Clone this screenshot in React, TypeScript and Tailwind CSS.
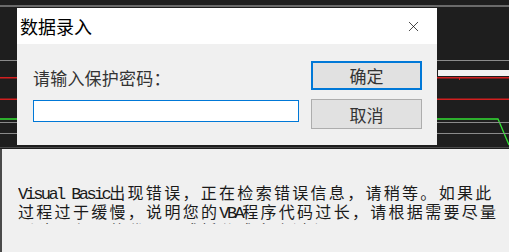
import { X } from "lucide-react";

const cjk = "font-['Noto_Sans_CJK_SC',sans-serif]";

function ChartBackdrop() {
  // the dark price chart behind the dialog
  return (
    <svg width="509" height="149" viewBox="0 0 509 149" className="block">
      <rect x="0" y="0" width="509" height="149" fill="#1e1e1e" />
      <rect x="0" y="5" width="509" height="2" fill="#6a6a6a" />
      <rect x="0" y="60" width="509" height="1" fill="#8a8a8a" />
      <rect x="438" y="70" width="71" height="6" fill="#f2f2f2" />
      <rect x="0" y="77" width="509" height="1.5" fill="#d21f1f" />
      <rect x="459" y="77" width="1" height="3" fill="#d21f1f" />
      <rect x="0" y="98.5" width="509" height="1.5" fill="#d21f1f" />
      <polyline points="0,119 498,119 509,145" fill="none" stroke="#33e033" strokeWidth="1.3" />
      <rect x="0" y="122" width="509" height="1" fill="#8a8a8a" />
      <rect x="0" y="133" width="509" height="1" fill="#8a8a8a" />
      <rect x="0" y="147" width="509" height="1" fill="#4a4a4a" />
    </svg>
  );
}

function PasswordDialog() {
  return (
    <div className={`absolute left-[17px] top-[8px] w-[420px] flex flex-col ${cjk}`}>
      <div className="h-[36px] bg-white flex items-center justify-between pl-[3px] pr-[15px]">
        <span className="text-[18px] text-black leading-none">数据录入</span>
        <X size={17} strokeWidth={1} className="text-black" />
      </div>
      <div className="h-[101px] bg-[#f0f0f0] flex gap-[12px] pl-[16px] pt-[17px]">
        <div className="w-[266px] flex flex-col">
          <div className="h-[34px] flex items-center text-[17px] text-[#333] tracking-[0.2px]">请输入保护密码：</div>
          <input className="mt-[5px] h-[22px] border border-[#0078d7] bg-white outline-none" />
        </div>
        <div className="w-[111px] flex flex-col gap-[9px]">
          <button className="h-[29px] bg-[#e1e1e1] border-2 border-[#0078d7] text-[17px] text-[#333] leading-none">确定</button>
          <button className="h-[30px] bg-[#e1e1e1] border border-[#adadad] text-[17px] text-[#333] leading-none">取消</button>
        </div>
      </div>
    </div>
  );
}

function Lat({ children }: { children: React.ReactNode }) {
  return <span className="font-['Liberation_Mono',monospace] text-[17px] tracking-[-2.6px]">{children}</span>;
}

export default function App() {
  return (
    <div className="w-[509px] h-[252px] bg-[#1e1e1e] flex flex-col overflow-hidden">
      <div className="relative h-[149px]">
        <ChartBackdrop />
        <PasswordDialog />
      </div>
      <div className={`flex-1 bg-[#f0f0f0] border-l-2 border-[#4a4a4a] pl-[16px] pt-[35px] ${cjk}`}>
        <div className="h-[40px] overflow-hidden text-[16px] leading-[17px] text-[#1a1a1a] tracking-[2.3px] whitespace-nowrap">
          <div><Lat>Visual Basic</Lat>出现错误，正在检索错误信息，请稍等。如果此</div>
          <div>过程过于缓慢，说明您的<Lat>VBA</Lat>程序代码过长，请根据需要尽量</div>
          <div>删除不必要的代码，或拆分成多个过程。</div>
        </div>
      </div>
    </div>
  );
}
